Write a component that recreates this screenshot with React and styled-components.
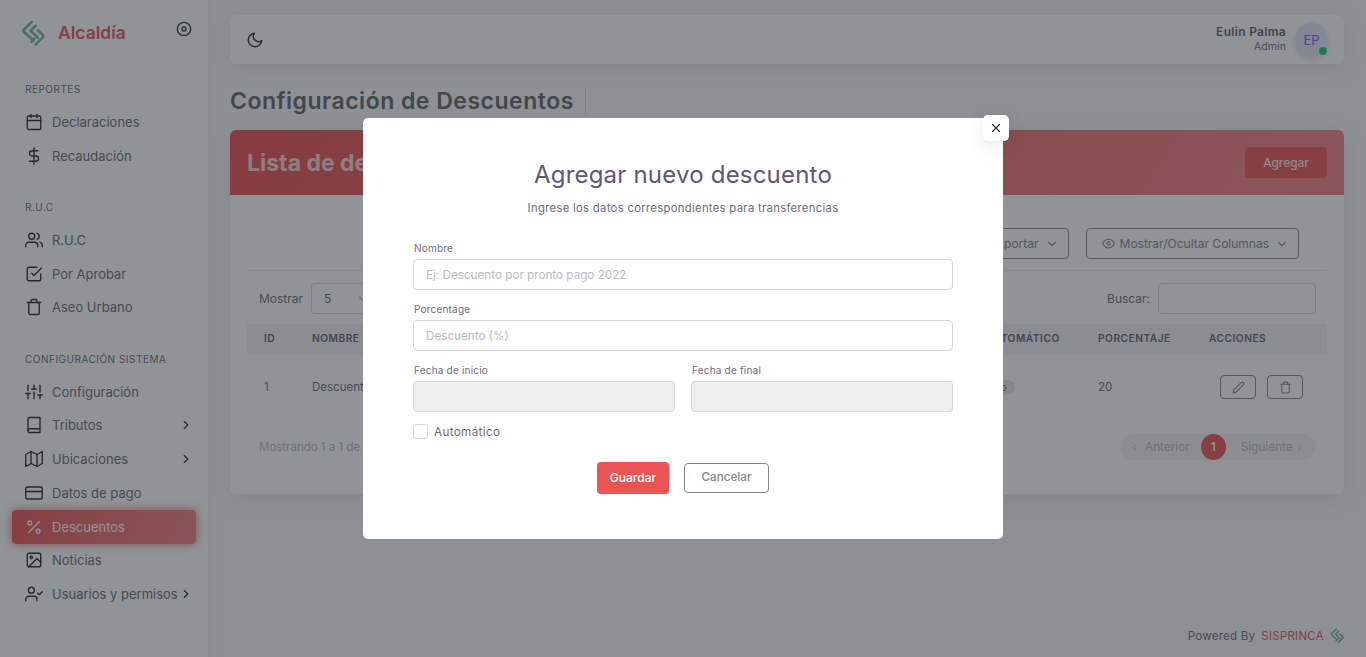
import React from 'react';
import styled, { createGlobalStyle } from 'styled-components';
import {
	FiBook,
	FiCalendar,
	FiCheckSquare,
	FiChevronDown,
	FiChevronLeft,
	FiChevronRight,
	FiCreditCard,
	FiDisc,
	FiDollarSign,
	FiEdit2,
	FiEye,
	FiImage,
	FiMap,
	FiMoon,
	FiPercent,
	FiShare,
	FiSliders,
	FiTrash,
	FiUserCheck,
	FiUsers,
	FiX,
} from 'react-icons/fi';

const GlobalStyle = createGlobalStyle`
	* {
		box-sizing: border-box;
	}
	html,
	body {
		margin: 0;
		height: 100%;
		background: #f8f8f8;
		font-family: Inter, "Noto Sans", "Liberation Sans", sans-serif;
		font-size: 13px;
		color: #6e6b7b;
		overflow: hidden;
	}
`;

const Layout = styled.div`
	display: flex;
	height: 657px;
`;

const Sidebar = styled.aside`
	width: 208px;
	flex-shrink: 0;
	background: #fff;
	box-shadow: 0 0 15px rgba(34, 41, 47, 0.08);
`;

const Brand = styled.div`
	height: 81px;
	padding: 20px 16px 0 21px;
	display: flex;
	align-items: flex-start;
`;

const BrandName = styled.span`
	margin: 2px 0 0 13px;
	font-size: 17.5px;
	font-weight: 600;
	color: #ea5455;
	flex: 1;
`;

const PinIcon = styled.span`
	display: flex;
	margin-top: 1px;
	color: #2f3338;
`;

const Section = styled.div`
	margin-bottom: 26.5px;
`;

const SectionLabel = styled.div`
	height: 16px;
	margin: 0 0 8px 25px;
	font-size: 10px;
	line-height: 16px;
	letter-spacing: 0.5px;
	text-transform: uppercase;
	color: #6c6c70;
`;

const NavItem = styled.div`
	height: 33.75px;
	margin: 0 12px;
	padding: 0 3px 0 13px;
	display: flex;
	align-items: center;
	gap: 9px;
	border-radius: 4px;
	color: ${(p) => (p.$active ? '#fff' : '#6c6c70')};
	background: ${(p) => (p.$active ? 'linear-gradient(118deg, #ea5455, #f08182)' : 'transparent')};
	box-shadow: ${(p) => (p.$active ? '0 0 10px 1px rgba(234, 84, 85, 0.7)' : 'none')};
	svg {
		flex-shrink: 0;
		color: ${(p) => (p.$active ? '#fff' : '#22262b')};
	}
`;

const NavText = styled.span`
	flex: 1;
	min-width: 0;
	white-space: nowrap;
`;

const Main = styled.main`
	flex: 1;
	min-width: 0;
	padding: 15px 22px 13px;
	display: flex;
	flex-direction: column;
`;

const Topbar = styled.header`
	height: 49px;
	padding: 0 16px 0 16px;
	display: flex;
	align-items: center;
	justify-content: space-between;
	background: #fff;
	border-radius: 6px;
	box-shadow: 0 4px 24px rgba(34, 41, 47, 0.1);
	> svg {
		color: #2f3338;
	}
`;

const UserBox = styled.div`
	display: flex;
	align-items: center;
	gap: 9px;
`;

const UserText = styled.div`
	text-align: right;
`;

const UserName = styled.div`
	font-size: 12px;
	font-weight: 600;
	line-height: 15px;
	letter-spacing: 0.3px;
	color: #626268;
`;

const UserRole = styled.div`
	font-size: 10.5px;
	line-height: 16px;
	letter-spacing: 0.1px;
`;

const Avatar = styled.div`
	position: relative;
	width: 33px;
	height: 33px;
	border-radius: 50%;
	display: flex;
	align-items: center;
	justify-content: center;
	font-size: 13px;
	color: #7367f0;
	background: #e6e4fb;
	box-shadow: 0 2px 6px rgba(34, 41, 47, 0.15);
`;

const OnlineDot = styled.span`
	position: absolute;
	right: 1px;
	bottom: 1px;
	width: 8px;
	height: 8px;
	border-radius: 50%;
	background: #28c76f;
`;

const TitleRow = styled.div`
	margin: 23px 0 15px;
	display: flex;
	align-items: center;
	height: 28px;
`;

const PageTitle = styled.h2`
	margin: 0;
	padding-right: 11px;
	border-right: 1px solid #d6dce1;
	font-size: 23px;
	font-weight: 600;
	line-height: 28px;
	letter-spacing: 0.5px;
	color: #62646a;
`;

const Card = styled.section`
	height: 364px;
	background: #fff;
	border-radius: 6px;
	box-shadow: 0 4px 24px rgba(34, 41, 47, 0.1);
	overflow: hidden;
`;

const CardHeader = styled.div`
	height: 65px;
	padding: 0 17px;
	display: flex;
	align-items: center;
	justify-content: space-between;
	background: linear-gradient(118deg, #ea4d50, #f48385);
`;

const CardTitle = styled.h3`
	margin: 0;
	font-size: 23px;
	font-weight: 700;
	color: #fff;
	opacity: 0.75;
`;

const AddButton = styled.button`
	width: 82px;
	height: 31px;
	border: none;
	border-radius: 4px;
	background: #ea4d50;
	color: #fff;
	opacity: 0.85;
	font: 500 11.8px Inter, sans-serif;
`;

const ToolRow = styled.div`
	margin: 33px 17px 0;
	padding: 0 28px 11px 0;
	display: flex;
	justify-content: flex-end;
	gap: 17px;
	border-bottom: 1px solid #ebe9f1;
`;

const OutlineButton = styled.button`
	height: 31px;
	padding: 0 9px 0 15px;
	display: flex;
	align-items: center;
	gap: 5px;
	background: transparent;
	border: 1px solid #82868b;
	border-radius: 4px;
	color: #82868b;
	font: 400 12px Inter, sans-serif;
	white-space: nowrap;
	svg:last-child {
		margin-left: 1px;
	}
`;

const FilterRow = styled.div`
	margin: 12px 28px 10px 29px;
	display: flex;
	align-items: center;
	justify-content: space-between;
`;

const FilterGroup = styled.label`
	display: flex;
	align-items: center;
	gap: 8px;
	font-size: 12px;
`;

const FakeSelect = styled.div`
	width: 70px;
	height: 31px;
	padding: 0 10px 0 12px;
	display: flex;
	align-items: center;
	justify-content: space-between;
	border: 1px solid #d8d6de;
	border-radius: 4px;
	color: #b9b9c3;
	span {
		color: #6e6b7b;
		font-size: 12px;
	}
`;

const SearchBox = styled.div`
	width: 158px;
	height: 31px;
	border: 1px solid #d8d6de;
	border-radius: 4px;
`;

const Row = styled.div`
	margin: 0 17px;
	height: ${(p) => (p.$head ? '31px' : '64px')};
	padding-left: 17px;
	padding-bottom: ${(p) => (p.$head ? '3px' : '0')};
	display: grid;
	grid-template-columns: 48px 1fr 113px 111px 118px;
	align-items: center;
	background: ${(p) => (p.$head ? '#f3f2f7' : 'transparent')};
	font-size: ${(p) => (p.$head ? '10.2px' : '11.5px')};
	font-weight: ${(p) => (p.$head ? 600 : 400)};
	letter-spacing: ${(p) => (p.$head ? '0.5px' : '0')};
	text-transform: ${(p) => (p.$head ? 'uppercase' : 'none')};
	color: ${(p) => (p.$head ? '#62646a' : '#6e6b7b')};
`;

const Badge = styled.span`
	justify-self: start;
	padding: 1px 8px;
	border-radius: 10px;
	background: #e4e5e7;
	font-size: 10px;
`;

const Actions = styled.div`
	display: flex;
	gap: 11px;
	padding-left: 11px;
`;

const IconButton = styled.div`
	width: 36px;
	height: 24px;
	display: flex;
	align-items: center;
	justify-content: center;
	border: 1px solid #82868b;
	border-radius: 4px;
	color: #82868b;
`;

const TableFooter = styled.div`
	margin: 15px 28px 0 29px;
	display: flex;
	align-items: center;
	justify-content: space-between;
	font-size: 11.5px;
	color: #b9b9c3;
`;

const Pager = styled.div`
	height: 26px;
	width: 196px;
	padding: 0 0 0 9px;
	display: flex;
	align-items: center;
	border-radius: 13px;
	background: #f3f2f7;
	font-size: 11.8px;
`;

const PagerLink = styled.span`
	display: flex;
	align-items: center;
	gap: ${(p) => p.$gap}px;
`;

const PagerCurrent = styled.span`
	width: 25px;
	height: 26px;
	margin: 0 15px 0 11px;
	border-radius: 50%;
	display: flex;
	align-items: center;
	justify-content: center;
	background: #ea5455;
	color: #fff;
	font-weight: 600;
`;

const Footer = styled.footer`
	margin-top: auto;
	display: flex;
	align-items: center;
	justify-content: flex-end;
	gap: 6px;
	font-size: 11.5px;
	letter-spacing: 0.25px;
`;

const FooterBrand = styled.span`
	color: #ea5455;
`;

const Backdrop = styled.div`
	position: fixed;
	inset: 0;
	display: flex;
	align-items: center;
	justify-content: center;
	background: rgba(34, 41, 47, 0.5);
`;

const Modal = styled.div`
	position: relative;
	width: 640px;
	height: 421px;
	padding: 42px 50px 0;
	background: #fff;
	border-radius: 5px;
`;

const CloseButton = styled.button`
	position: absolute;
	top: -3px;
	right: -6px;
	width: 26px;
	height: 26px;
	padding: 0;
	display: flex;
	align-items: center;
	justify-content: center;
	border: none;
	border-radius: 5px;
	background: #fff;
	color: #2f2f3a;
	box-shadow: 0 5px 20px rgba(34, 41, 47, 0.1);
`;

const ModalTitle = styled.h1`
	margin: 0;
	height: 30px;
	text-align: center;
	font-size: 24px;
	line-height: 30px;
	font-weight: 400;
	letter-spacing: 0.2px;
	color: #5e5873;
`;

const ModalSub = styled.p`
	margin: 10px 0 24px;
	text-align: center;
	font-size: 11.3px;
	line-height: 16px;
	letter-spacing: 0.3px;
`;

const Field = styled.div`
	margin-bottom: 11px;
`;

const FieldLabel = styled.label`
	display: block;
	height: 16px;
	margin: 0 0 3px 1px;
	font-size: 10px;
	line-height: 16px;
	letter-spacing: 0.2px;
	color: #6e6b7b;
`;

const TextInput = styled.input`
	display: block;
	width: 100%;
	height: 31px;
	padding: 0 12px;
	border: 1px solid #d8d6de;
	border-radius: 4px;
	background: ${(p) => (p.disabled ? '#efefef' : '#fff')};
	font: 400 11.7px Inter, sans-serif;
	&::placeholder {
		color: #b9b9c3;
	}
`;

const DateGrid = styled.div`
	display: grid;
	grid-template-columns: 1fr 1fr;
	gap: 16px;
	${Field} {
		margin-bottom: 0;
	}
`;

const CheckRow = styled.label`
	margin-top: 12px;
	display: flex;
	align-items: center;
	gap: 6px;
	font-size: 11.7px;
	letter-spacing: 0.35px;
	color: #6e6b7b;
`;

const CheckBox = styled.span`
	width: 15px;
	height: 15px;
	border: 1px solid #d8d6de;
	border-radius: 3px;
`;

const ModalActions = styled.div`
	margin-top: 23px;
	display: flex;
	align-items: center;
	justify-content: center;
	gap: 15px;
`;

const SaveButton = styled.button`
	width: 72px;
	height: 32px;
	padding: 0 0 2px;
	border: none;
	border-radius: 4px;
	background: #ea5455;
	color: #fff;
	font: 500 12px Inter, sans-serif;
`;

const CancelButton = styled.button`
	width: 85px;
	height: 30px;
	padding: 0 0 2px;
	border: 1px solid #82868b;
	border-radius: 4px;
	background: #fff;
	color: #82868b;
	font: 500 11.7px Inter, sans-serif;
`;

const navSections = [
	{
		label: 'Reportes',
		items: [
			{ icon: FiCalendar, text: 'Declaraciones' },
			{ icon: FiDollarSign, text: 'Recaudación' },
		],
	},
	{
		label: 'R.U.C',
		items: [
			{ icon: FiUsers, text: 'R.U.C' },
			{ icon: FiCheckSquare, text: 'Por Aprobar' },
			{ icon: FiTrash, text: 'Aseo Urbano' },
		],
	},
	{
		label: 'Configuración Sistema',
		items: [
			{ icon: FiSliders, text: 'Configuración' },
			{ icon: FiBook, text: 'Tributos', more: true },
			{ icon: FiMap, text: 'Ubicaciones', more: true },
			{ icon: FiCreditCard, text: 'Datos de pago' },
			{ icon: FiPercent, text: 'Descuentos', active: true },
			{ icon: FiImage, text: 'Noticias' },
			{ icon: FiUserCheck, text: 'Usuarios y permisos', more: true },
		],
	},
];

const Logo = ({ size }) => (
	<svg width={size} height={size * 1.12} viewBox="0 0 24 27" fill="none" stroke="#6bb892" strokeWidth="2.6" strokeLinecap="round" strokeLinejoin="round">
		<path d="M10.7 2.2 3 9.6 q-1.2 1.2 0 2.4 L11.5 19.5" />
		<path d="M14.7 5.7 9.5 10.8 17 18" />
		<path d="M14.5 24.8 21.8 17.4 q1.2 -1.2 0 -2.4 L17 10.5" />
		<path d="M10.5 22 13.5 19" />
	</svg>
);

const App = () => (
	<>
		<GlobalStyle />
		<Layout>
			<Sidebar>
				<Brand>
					<Logo size={24} />
					<BrandName>Alcaldía</BrandName>
					<PinIcon>
						<FiDisc size={16} />
					</PinIcon>
				</Brand>
				{navSections.map((section) => (
					<Section key={section.label}>
						<SectionLabel>{section.label}</SectionLabel>
						{section.items.map(({ icon: Icon, text, more, active }) => (
							<NavItem key={text} $active={active}>
								<Icon size={18} strokeWidth={1.8} />
								<NavText>{text}</NavText>
								{more && <FiChevronRight size={14} />}
							</NavItem>
						))}
					</Section>
				))}
			</Sidebar>
			<Main>
				<Topbar>
					<FiMoon size={18} />
					<UserBox>
						<UserText>
							<UserName>Eulin Palma</UserName>
							<UserRole>Admin</UserRole>
						</UserText>
						<Avatar>
							EP
							<OnlineDot />
						</Avatar>
					</UserBox>
				</Topbar>
				<TitleRow>
					<PageTitle>Configuración de Descuentos</PageTitle>
				</TitleRow>
				<Card>
					<CardHeader>
						<CardTitle>Lista de descuentos</CardTitle>
						<AddButton>Agregar</AddButton>
					</CardHeader>
					<ToolRow>
						<OutlineButton>
							<FiShare size={13} /> Exportar <FiChevronDown size={14} />
						</OutlineButton>
						<OutlineButton>
							<FiEye size={13} /> Mostrar/Ocultar Columnas <FiChevronDown size={14} />
						</OutlineButton>
					</ToolRow>
					<FilterRow>
						<FilterGroup>
							Mostrar
							<FakeSelect>
								<span>5</span>
								<FiChevronDown size={14} />
							</FakeSelect>
						</FilterGroup>
						<FilterGroup>
							Buscar:
							<SearchBox />
						</FilterGroup>
					</FilterRow>
					<Row $head>
						<span>ID</span>
						<span>Nombre</span>
						<span>Automático</span>
						<span>Porcentaje</span>
						<span>Acciones</span>
					</Row>
					<Row>
						<span>1</span>
						<span>Descuento por pronto pago</span>
						<Badge>No</Badge>
						<span>20</span>
						<Actions>
							<IconButton>
								<FiEdit2 size={13} />
							</IconButton>
							<IconButton>
								<FiTrash size={13} />
							</IconButton>
						</Actions>
					</Row>
					<TableFooter>
						<span>Mostrando 1 a 1 de 1 registros</span>
						<Pager>
							<PagerLink $gap={5}>
								<FiChevronLeft size={11} /> Anterior
							</PagerLink>
							<PagerCurrent>1</PagerCurrent>
							<PagerLink $gap={1}>
								Siguiente <FiChevronRight size={11} />
							</PagerLink>
						</Pager>
					</TableFooter>
				</Card>
				<Footer>
					Powered By <FooterBrand>SISPRINCA</FooterBrand>
					<Logo size={14} />
				</Footer>
			</Main>
		</Layout>
		<Backdrop>
			<Modal>
				<CloseButton>
					<FiX size={14} />
				</CloseButton>
				<ModalTitle>Agregar nuevo descuento</ModalTitle>
				<ModalSub>Ingrese los datos correspondientes para transferencias</ModalSub>
				<Field>
					<FieldLabel>Nombre</FieldLabel>
					<TextInput placeholder="Ej: Descuento por pronto pago 2022" />
				</Field>
				<Field>
					<FieldLabel>Porcentage</FieldLabel>
					<TextInput placeholder="Descuento (%)" />
				</Field>
				<DateGrid>
					<Field>
						<FieldLabel>Fecha de inicio</FieldLabel>
						<TextInput disabled />
					</Field>
					<Field>
						<FieldLabel>Fecha de final</FieldLabel>
						<TextInput disabled />
					</Field>
				</DateGrid>
				<CheckRow>
					<CheckBox />
					Automático
				</CheckRow>
				<ModalActions>
					<SaveButton>Guardar</SaveButton>
					<CancelButton>Cancelar</CancelButton>
				</ModalActions>
			</Modal>
		</Backdrop>
	</>
);

export default App;
